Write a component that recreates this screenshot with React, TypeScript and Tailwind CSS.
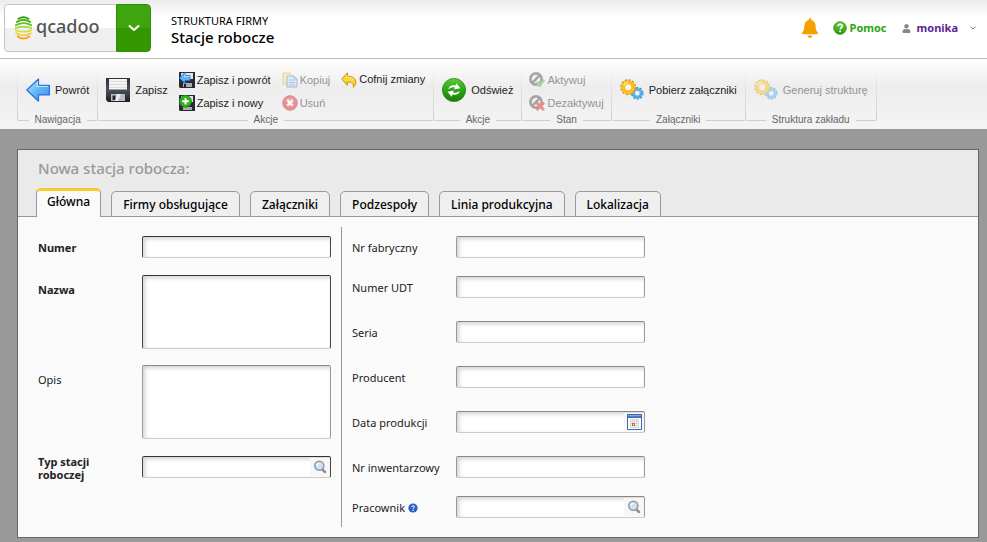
import React from "react";
import { FaBell, FaUser } from "react-icons/fa";

const NOTO = "font-['Noto_Sans',sans-serif]";

function Logo() {
  const arcs = [
    ["#35a010", "M3.500 2.800Q8.500-.2 13.500 2.800"],
    ["#45ad14", "M1.800 6Q8.500 1.800 15.200 6"],
    ["#62c41c", "M.9 9.200Q8.500 5 16.100 9.200"],
    ["#a8de58", "M.6 12Q8.500 9.500 16.400 12"],
    ["#cfe04a", "M.8 14.300Q8.500 17 16.200 14.300"],
    ["#f3cf30", "M1.300 17.300Q8.500 21.500 15.700 17.300"],
    ["#f6a417", "M2.700 20.500Q8.500 24.600 14.300 20.500"],
  ];
  return (
    <svg viewBox="0 0 17 24" className="h-6 w-[17px]">
      {arcs.map(([stroke, d]) => (
        <path key={d} d={d} fill="none" stroke={stroke} strokeWidth="1.900" strokeLinecap="round" />
      ))}
    </svg>
  );
}

function ArrowBack({ className = "size-6" }: { className?: string }) {
  return (
    <svg viewBox="0 0 24 24" className={className}>
      <defs>
        <linearGradient id="arrow" x1="0" y1="0" x2="1" y2="1">
          <stop offset="0" stopColor="#c8f0ff" />
          <stop offset="0.5" stopColor="#5cb8f5" />
          <stop offset="1" stopColor="#3d8fee" />
        </linearGradient>
      </defs>
      <path d="M12.500 1v6.300H23.400v9.600H12.500v6.300L.8 12z" fill="url(#arrow)" stroke="#2f6be0" strokeWidth="1.200" strokeLinejoin="round" />
      <path d="M11.400 3.800v4.600h10.800" fill="none" stroke="#dff5ff" strokeWidth="0.800" />
    </svg>
  );
}

function Disk({ className = "size-6" }: { className?: string }) {
  return (
    <svg viewBox="0 0 24 24" className={className}>
      <defs>
        <linearGradient id="disk" x1="0" y1="0" x2="0" y2="1">
          <stop offset="0" stopColor="#2c3038" />
          <stop offset="0.5" stopColor="#4a4f5a" />
          <stop offset="1" stopColor="#1b1e25" />
        </linearGradient>
      </defs>
      <path d="M0 0h24v24H2L0 22z" fill="url(#disk)" />
      <path d="M3 1h18v10.500H3z" fill="#f4f4f4" />
      <path d="M3 3.500h18M3 6.500h18M3 9.500h18" stroke="#d6d6d6" strokeWidth="0.800" />
      <path d="M5 16h14v7H5z" fill="#b9bcc0" />
      <path d="M6.500 17.500h3v4.500h-3z" fill="#23262d" />
      <path d="M11 16h4l-3 7h-3z" fill="#e9eaec" />
    </svg>
  );
}

function SaveBack() {
  return (
    <svg viewBox="0 0 16 16" className="size-4">
      <path d="M0 0h16v16H1L0 15z" fill="#272b33" />
      <path d="M2 1h12v6H2z" fill="#e4e4e4" />
      <path d="M4 11h9v4H4z" fill="#a9acb0" />
      <path d="M5 12h2v3H5z" fill="#222" />
      <path d="M6 .5v3h5v5H6v3L.4 6z" fill="#58b4f4" stroke="#2470d8" strokeWidth="0.800" />
      <path d="M5.500 2.500v2h5" fill="none" stroke="#d5f2ff" strokeWidth="0.800" />
    </svg>
  );
}

function SaveNew() {
  return (
    <svg viewBox="0 0 16 16" className="size-4">
      <path d="M0 0h16v16H1L0 15z" fill="#272b33" />
      <path d="M2 1h12v6H2z" fill="#e4e4e4" />
      <path d="M4 12h9v3H4z" fill="#a9acb0" />
      <circle cx="6.500" cy="6.300" r="6" fill="#34ae1c" stroke="#1f8a0e" strokeWidth="0.700" />
      <path d="M6.500 3v6.600M3.200 6.300h6.600" stroke="#fff" strokeWidth="2" />
    </svg>
  );
}

function CopyIcon() {
  return (
    <svg viewBox="0 0 16 16" className="size-4">
      <path d="M1 1h7l2 2v9H1z" fill="#fbe48c" stroke="#d9ad2e" />
      <path d="M5 4h7l3 3v8H5z" fill="#c6defa" stroke="#4a80c8" />
      <path d="M12 4v3h3M7 8h6M7 10.500h6M7 13h6" fill="none" stroke="#5a90d4" strokeWidth="0.900" />
    </svg>
  );
}

function DeleteIcon() {
  return (
    <svg viewBox="0 0 16 16" className="size-4">
      <circle cx="8" cy="8" r="7.300" fill="#e01c26" stroke="#b0141c" strokeWidth="0.900" />
      <path d="M3 5a6 5 0 0 1 10 0Q8 8 3 5" fill="#ec5c64" />
      <path d="M5.300 5.300l5.400 5.400M10.700 5.300l-5.400 5.400" stroke="#fff" strokeWidth="2.500" />
    </svg>
  );
}

function UndoIcon() {
  return (
    <svg viewBox="0 0 16 16" className="size-4">
      <path d="M6.300.8v3.400c5 0 8.500 2 8.500 6 0 2.300-1.200 4-2.500 5 .6-3.600-1.200-5.200-6-5.200v3.300L.8 7.100z" fill="#fbd733" stroke="#b98a0b" strokeWidth="0.900" strokeLinejoin="round" />
      <path d="M5.500 3v2.200c3 0 6 .6 7.600 2.600" fill="none" stroke="#fff2a0" strokeWidth="0.800" />
    </svg>
  );
}

function RefreshIcon() {
  return (
    <svg viewBox="0 0 24 24" className="size-6">
      <defs>
        <linearGradient id="refresh" x1="0" y1="0" x2="0" y2="1">
          <stop offset="0" stopColor="#5ccb3c" />
          <stop offset="0.5" stopColor="#2ca514" />
          <stop offset="1" stopColor="#1c7d0b" />
        </linearGradient>
      </defs>
      <circle cx="12" cy="12" r="11.600" fill="url(#refresh)" stroke="#1d7a0e" strokeWidth="0.700" />
      <path d="M6.200 11.300c.6-3.300 4-4.900 7.300-3.700l.9-2.300 4 4.900-6.300 1.300.8-1.900c-2.200-.8-4.200-.2-6.700 1.700z" fill="#fff" />
      <path d="M17.800 12.700c-.6 3.300-4 4.900-7.300 3.700l-.9 2.300-4-4.900 6.300-1.300-.8 1.900c2.200.8 4.200.2 6.700-1.700z" fill="#fff" />
    </svg>
  );
}

function StateIcon({ on }: { on: boolean }) {
  return (
    <svg viewBox="0 0 16 16" className="size-4">
      <circle cx="7" cy="7" r="5.600" fill="none" stroke="#4a4a4a" strokeWidth="2.600" />
      <path d="M3.200 10.800l7.600-7.600" stroke="#4a4a4a" strokeWidth="2.400" />
      {on ? (
        <path d="M6.500 11l2-1.500 2 2 3.500-4 1.700 1-5 6.500z" fill="#69b544" stroke="#3f8f22" strokeWidth="0.600" />
      ) : (
        <path d="M7.500 7.500l7.500 7.500M15 7.500l-7.500 7.500" stroke="#e01414" strokeWidth="2.900" />
      )}
    </svg>
  );
}

function GearsIcon() {
  return (
    <svg viewBox="0 0 24 24" className="size-6">
      <circle cx="17.300" cy="15.300" r="5.300" fill="none" stroke="#3487c4" strokeWidth="2" strokeDasharray="1.900 1.430" />
      <circle cx="17.300" cy="15.300" r="3.900" fill="#e8f5fd" stroke="#4fb2ee" strokeWidth="2.900" />
      <circle cx="8.200" cy="9.200" r="7" fill="none" stroke="#d08e0c" strokeWidth="2" strokeDasharray="2.200 1.465" />
      <circle cx="8.200" cy="9.200" r="5" fill="#f5f3ea" stroke="#fbbd1c" strokeWidth="4" />
      <path d="M3.800 7.500A4.800 4.800 0 0 1 8 4.300" fill="none" stroke="#ffe793" strokeWidth="1.200" />
    </svg>
  );
}

function HelpIcon() {
  return (
    <svg viewBox="0 0 14 14" className="size-[14px]">
      <defs>
        <linearGradient id="help" x1="0" y1="0" x2="0" y2="1">
          <stop offset="0" stopColor="#6cc93c" />
          <stop offset="1" stopColor="#2c9a10" />
        </linearGradient>
      </defs>
      <circle cx="7" cy="7" r="6.300" fill="url(#help)" stroke="#2f8f14" strokeWidth="0.800" />
      <path d="M4.900 5.300c0-2.600 4.300-2.500 4.300 0 0 1.500-2 1.400-2 3" fill="none" stroke="#fff" strokeWidth="1.600" />
      <circle cx="7.100" cy="10.300" r="1" fill="#fff" />
    </svg>
  );
}

function Chevron({ className }: { className: string }) {
  return (
    <svg viewBox="0 0 12 8" className={className} fill="none" stroke="currentColor" strokeWidth="2" strokeLinecap="round" strokeLinejoin="round">
      <path d="M1.500 2L6 6l4.500-4" />
    </svg>
  );
}

function Lens() {
  return (
    <svg viewBox="0 0 14 14" className="size-[14px]">
      <path d="M9 9.200l3 2.800" stroke="#8c8c8c" strokeWidth="2.400" strokeLinecap="round" />
      <circle cx="6.300" cy="5.800" r="4.500" fill="#cbe2fb" stroke="#999" strokeWidth="1.600" />
      <path d="M4 6a2.500 2.500 0 0 1 2.500-2.500" fill="none" stroke="#fff" strokeWidth="1.200" />
    </svg>
  );
}

function CalendarIcon() {
  return (
    <svg viewBox="0 0 15 16" className="h-4 w-[15px]">
      <path d="M.5.5h14v15H.5z" fill="#fff" stroke="#3c67b0" />
      <path d="M.5.500h14v3H.5z" fill="#4f7fcb" stroke="#3c67b0" />
      <path d="M1 1.500h13" stroke="#8fb2e8" strokeWidth="0.800" />
      <path d="M3 5.500h9M3 7.500h9M3 9.500h9M3 11.500h9M3 13.500h9M3.500 5v9M5.500 5v9M7.500 5v9M9.500 5v9M11.500 5v9" stroke="#d0d0d0" strokeWidth="0.800" />
      <path d="M5.500 9.500h2v2h-2z" fill="#fff" stroke="#c9523c" />
    </svg>
  );
}

function BigButton({ icon, label, disabled }: { icon: React.ReactNode; label: string; disabled?: boolean }) {
  return (
    <button type="button" disabled={disabled} className="flex items-center gap-[5px] whitespace-nowrap disabled:opacity-45">
      {icon}
      {label}
    </button>
  );
}

function SmallButton({ icon, label, disabled }: { icon: React.ReactNode; label: string; disabled?: boolean }) {
  return (
    <button type="button" disabled={disabled} className="flex h-[23px] items-center gap-0.5 whitespace-nowrap disabled:opacity-45">
      {icon}
      {label}
    </button>
  );
}

function Group({ title, last, tight, children }: { title: string; last?: boolean; tight?: boolean; children: React.ReactNode }) {
  return (
    <section className="flex">
      <div className="mb-[7px] w-px shrink-0 bg-linear-to-b from-transparent to-[#cfcfcf]" />
      <div className="flex flex-col">
        <div className={`flex h-[46px] items-center gap-[11px] ${tight ? "px-[7px]" : "px-2"}`}>{children}</div>
        <div className="flex items-center gap-1 text-[10px] leading-[14px] text-[#666]">
          <span className="h-px flex-1 bg-[#cfcfcf]" />
          <h2 className="px-0.5">{title}</h2>
          <span className="h-px flex-1 bg-[#cfcfcf]" />
        </div>
      </div>
      {last && <div className="mb-[7px] w-px shrink-0 bg-linear-to-b from-transparent to-[#cfcfcf]" />}
    </section>
  );
}

const box =
  "block w-full rounded-[2px] border border-b-[#ccc] bg-white px-1 shadow-[inset_2px_2px_4px_rgba(0,0,0,0.18)] outline-none";
const strong = "border-x-[#444] border-t-[#333]";
const soft = "border-x-[#999] border-t-[#888]";

type FieldProps = {
  id: string;
  label: string;
  required?: boolean;
  multiline?: boolean;
  action?: "lens" | "calendar";
  hint?: boolean;
  row: string;
};

function Field({ id, label, required, multiline, action, hint, row }: FieldProps) {
  return (
    <div className={`flex items-start pt-[9px] ${row}`}>
      <div className={`flex w-[104px] shrink-0 items-center pr-3 ${multiline ? "h-7" : "h-[23px]"} ${required ? "font-bold" : ""}`}>
        <label htmlFor={id}>{label}</label>
        {hint && (
          <svg viewBox="0 0 10 10" className="ml-[3px] size-[10px]">
            <circle cx="5" cy="5" r="4.600" fill="#2b5fc7" />
            <path d="M3.700 4c0-1.700 2.700-1.700 2.700 0 0 .9-1.300.8-1.300 1.900" fill="none" stroke="#fff" />
            <circle cx="5.100" cy="7.300" r="0.700" fill="#fff" />
          </svg>
        )}
      </div>
      <div className="relative w-[189px]">
        {multiline ? (
          <textarea id={id} className={`${box} ${required ? strong : soft} h-[74px] resize-none`} />
        ) : (
          <input id={id} type="text" className={`${box} ${required ? strong : soft} h-[22px]`} />
        )}
        {action && (
          <button
            type="button"
            aria-label={action === "lens" ? "Szukaj" : "Kalendarz"}
            className="absolute inset-y-0.5 right-px flex w-5 items-center justify-center bg-[#f7f7f7]"
          >
            {action === "lens" ? <Lens /> : <CalendarIcon />}
          </button>
        )}
      </div>
    </div>
  );
}

const tabs = ["Firmy obsługujące", "Załączniki", "Podzespoły", "Linia produkcyjna", "Lokalizacja"];

export default function App() {
  return (
    <div className={`flex min-h-screen flex-col bg-[#999] ${NOTO}`}>
      <header className="flex h-[59px] items-start border-b border-[#bbb] bg-linear-to-b from-[#ececec] to-white to-30% px-1 pt-1">
        <div className="flex h-12 overflow-hidden rounded-[4px]">
          <a href="#" className="flex w-28 items-center gap-1 rounded-l-[4px] border border-r-0 border-[#c4c4c4] bg-linear-to-b from-white from-50% to-[#f0f0f0] to-50% pl-2.5 text-[#555]">
            <Logo />
            <span className="pb-1 text-[18px] leading-6 font-medium">qcadoo</span>
          </a>
          <button type="button" aria-label="Menu" className="flex w-[35px] items-center justify-center rounded-r-[4px] border border-[#2f8f08] bg-linear-to-b from-[#3fa50f] from-50% to-[#339700] to-50% text-white">
            <Chevron className="h-2 w-3" />
          </button>
        </div>
        <div className="ml-5 pt-[9px] text-black">
          <p className="text-[11px] leading-4">STRUKTURA FIRMY</p>
          <h1 className="text-[15px] leading-4 font-medium">Stacje robocze</h1>
        </div>
        <div className="mt-[13px] mr-[7px] ml-auto flex h-[22px] items-center text-[11px] font-bold">
          <button type="button" aria-label="Powiadomienia" className="mr-[15px] text-[#f5a000]">
            <FaBell className="h-5 w-4" preserveAspectRatio="none" />
          </button>
          <a href="#" className="mr-[15px] flex items-center gap-[3px] text-[#2ba512]">
            <HelpIcon />
            Pomoc
          </a>
          <button type="button" className="flex items-center text-[#5b1f96]">
            <FaUser className="mr-1.5 size-[9px] text-[#888]" />
            monika
            <Chevron className="ml-3 h-1 w-1.5 text-[#777]" />
          </button>
        </div>
      </header>

      <nav className="flex h-[70px] items-start bg-linear-to-b from-white via-[#ededed] via-40% to-[#f4f4f4] pt-2 pl-[17px] font-['Liberation_Sans',Arial,sans-serif] text-[11px] text-[#222]">
        <Group title="Nawigacja">
          <BigButton icon={<ArrowBack />} label="Powrót" />
        </Group>
        <Group title="Akcje">
          <BigButton icon={<Disk />} label="Zapisz" />
          <div className="pt-[3px]">
            <SmallButton icon={<SaveBack />} label="Zapisz i powrót" />
            <SmallButton icon={<SaveNew />} label="Zapisz i nowy" />
          </div>
          <div className="pt-[3px]">
            <SmallButton icon={<CopyIcon />} label="Kopiuj" disabled />
            <SmallButton icon={<DeleteIcon />} label="Usuń" disabled />
          </div>
          <div className="self-start pt-px">
            <SmallButton icon={<UndoIcon />} label="Cofnij zmiany" />
          </div>
        </Group>
        <Group title="Akcje">
          <BigButton icon={<RefreshIcon />} label="Odśwież" />
        </Group>
        <Group title="Stan" tight>
          <div className="pt-[3px]">
            <SmallButton icon={<StateIcon on />} label="Aktywuj" disabled />
            <SmallButton icon={<StateIcon on={false} />} label="Dezaktywuj" disabled />
          </div>
        </Group>
        <Group title="Załączniki">
          <BigButton icon={<GearsIcon />} label="Pobierz załączniki" />
        </Group>
        <Group title="Struktura zakładu" last>
          <BigButton icon={<GearsIcon />} label="Generuj strukturę" disabled />
        </Group>
      </nav>

      <main className="mt-5 mr-2 mb-1 ml-[17px] flex-1 border border-[#666] bg-[#fafafa]">
        <div className="border-b border-[#999] bg-[#eaeaea] pt-2">
          <h2 className="pl-5 text-[15px] leading-5 font-medium text-[#999]">Nowa stacja robocza:</h2>
          <div role="tablist" className="mt-2.5 -mb-px flex items-end gap-2.5 pl-[18px] text-[12px] text-black">
            <button type="button" role="tab" aria-selected="true" className="h-[29px] rounded-t-[5px] border-x border-t-[3px] border-x-[#999] border-t-[#f8cb2e] bg-[#fafafa] px-2.5 pb-1 font-medium">
              Główna
            </button>
            {tabs.map((t) => (
              <button key={t} type="button" role="tab" aria-selected="false" className="h-[26px] rounded-t-[5px] border border-[#999] bg-[#efefef] px-[11px] pt-0.5 font-medium">
                {t}
              </button>
            ))}
          </div>
        </div>

        <form className="flex pt-2.5 pb-2.5 pl-5 text-[11px] leading-[13px] text-[#222]">
          <div className="pr-2.5">
            <Field id="numer" label="Numer" required row="h-[39px]" />
            <Field id="nazwa" label="Nazwa" required multiline row="h-[90px]" />
            <Field id="opis" label="Opis" multiline row="h-[91px]" />
            <Field id="typ" label="Typ stacji roboczej" required action="lens" row="h-10" />
          </div>
          <div className="border-l border-[#999] pl-2.5">
            <Field id="fabryczny" label="Nr fabryczny" row="h-10" />
            <Field id="udt" label="Numer UDT" row="h-[45px]" />
            <Field id="seria" label="Seria" row="h-[45px]" />
            <Field id="producent" label="Producent" row="h-[45px]" />
            <Field id="data" label="Data produkcji" action="calendar" row="h-[45px]" />
            <Field id="inwentarzowy" label="Nr inwentarzowy" row="h-10" />
            <Field id="pracownik" label="Pracownik" action="lens" hint row="h-10" />
          </div>
        </form>
      </main>
    </div>
  );
}
